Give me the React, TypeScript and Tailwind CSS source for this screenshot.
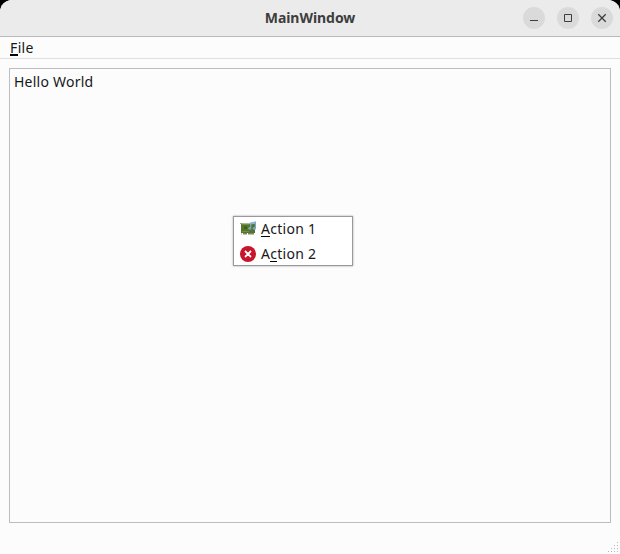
import type { ReactNode } from "react";

function WindowButton({ label, children }: { label: string; children: ReactNode }) {
  return (
    <button aria-label={label} className="flex h-[22px] w-[22px] items-center justify-center rounded-full bg-[#dadada]">
      <svg width="22" height="22" viewBox="0 0 22 22" fill="none" stroke="#3d3d3d">
        {children}
      </svg>
    </button>
  );
}

function TitleBar() {
  return (
    <header className="grid h-[37px] shrink-0 grid-cols-[1fr_auto_1fr] items-center rounded-t-[12px] border-b border-[#bababa] bg-[#ebebeb]">
      <span />
      <h1 className="text-[14px] leading-5 font-bold tracking-[-0.05px] text-[#3d3d3d]">MainWindow</h1>
      <div className="flex justify-end gap-3 pr-[7px]">
        <WindowButton label="Minimize">
          <path d="M7 13.5h8" />
        </WindowButton>
        <WindowButton label="Maximize">
          <path d="M7.5 7.5h7v7h-7z" />
        </WindowButton>
        <WindowButton label="Close">
          <path d="M7.3 7.3l7.4 7.4M14.7 7.3l-7.4 7.4" strokeWidth="1.3" />
        </WindowButton>
      </div>
    </header>
  );
}

function CardIcon() {
  return (
    <svg width="16" height="16" viewBox="0 0 16 16">
      <path d="M0 2h1.5v12H1V3H0z" fill="#9aa38a" />
      <path d="M1 2.5h14V12H1z" fill="#55752c" />
      <path d="M1.5 3h8v1h-8zM2 10h7v1H2z" fill="#6f9040" />
      <path d="M3 12h4v1.5H3zM8 12h6v1.5H8z" fill="#7d8a52" />
      <path d="M4 5.5h3V8H4z" fill="#3f5a28" />
      <path d="M10 1.6L16 .2v2.2l-6 1.4z" fill="#8db4cb" />
      <path d="M10.6 2.5V7M15.4 1.5v5.5" stroke="#78a6c2" strokeWidth="1.2" />
      <ellipse cx="9.8" cy="7.4" rx="1.6" ry="1.3" fill="#78a6c2" />
      <ellipse cx="14.4" cy="7.4" rx="1.6" ry="1.3" fill="#78a6c2" />
    </svg>
  );
}

function ErrorIcon() {
  return (
    <svg width="16" height="16" viewBox="0 0 16 16">
      <circle cx="8" cy="8" r="8" fill="#c7162b" />
      <path d="M5 5l6 6M11 5l-6 6" stroke="#fff" strokeWidth="1.8" />
    </svg>
  );
}

function MenuItem({ icon, children }: { icon: ReactNode; children: ReactNode }) {
  return (
    <div role="menuitem" className="flex h-[25px] items-center pl-1.5">
      {icon}
      <span className="ml-[5px] text-[14px] leading-5 tracking-[0.28px] whitespace-pre">{children}</span>
    </div>
  );
}

function Key({ children }: { children: string }) {
  return <span className="inline-block h-[18px] border-b border-black leading-5">{children}</span>;
}

export default function App() {
  return (
    <div className="h-[554px] w-[620px] bg-black font-['Noto_Sans','Open_Sans',sans-serif] text-[#17181a]">
      <div className="relative flex h-full flex-col rounded-t-[12px] bg-[#fcfcfc]">
        <TitleBar />
        <nav className="flex h-[22px] shrink-0 items-center border-b border-[#e0e0e0] pl-2.5 text-[14px] leading-5">
          <span className="tracking-[0.35px]">
            <span className="inline-block h-[18px] border-b-2 border-black leading-5">F</span>ile
          </span>
        </nav>
        <main className="mx-[9px] mt-[9px] h-[455px] border border-[#bdbdbd] px-1 pt-[3px]">
          <p className="text-[14px] leading-5 tracking-[0.24px]">Hello World</p>
        </main>
        <footer className="flex flex-1 items-end justify-end pr-0.5 pb-0.5">
          <svg width="10" height="10" viewBox="0 0 10 10" fill="#b8b8b8" shapeRendering="crispEdges">
            <path d="M9 0h1v1H9zM6 3h1v1H6zM9 3h1v1H9zM3 6h1v1H3zM6 6h1v1H6zM9 6h1v1H9zM0 9h1v1H0zM3 9h1v1H3zM6 9h1v1H6zM9 9h1v1H9z" />
          </svg>
        </footer>
        <div
          role="menu"
          className="absolute top-[216px] left-[233px] h-[50px] w-[120px] border border-[#999999] bg-white shadow-[0_0_2px_rgba(0,0,0,0.35)]"
        >
          <div className="-mt-px">
            <MenuItem icon={<CardIcon />}>
              <Key>A</Key>ction 1
            </MenuItem>
            <MenuItem icon={<ErrorIcon />}>
              A<Key>c</Key>tion 2
            </MenuItem>
          </div>
        </div>
      </div>
    </div>
  );
}
